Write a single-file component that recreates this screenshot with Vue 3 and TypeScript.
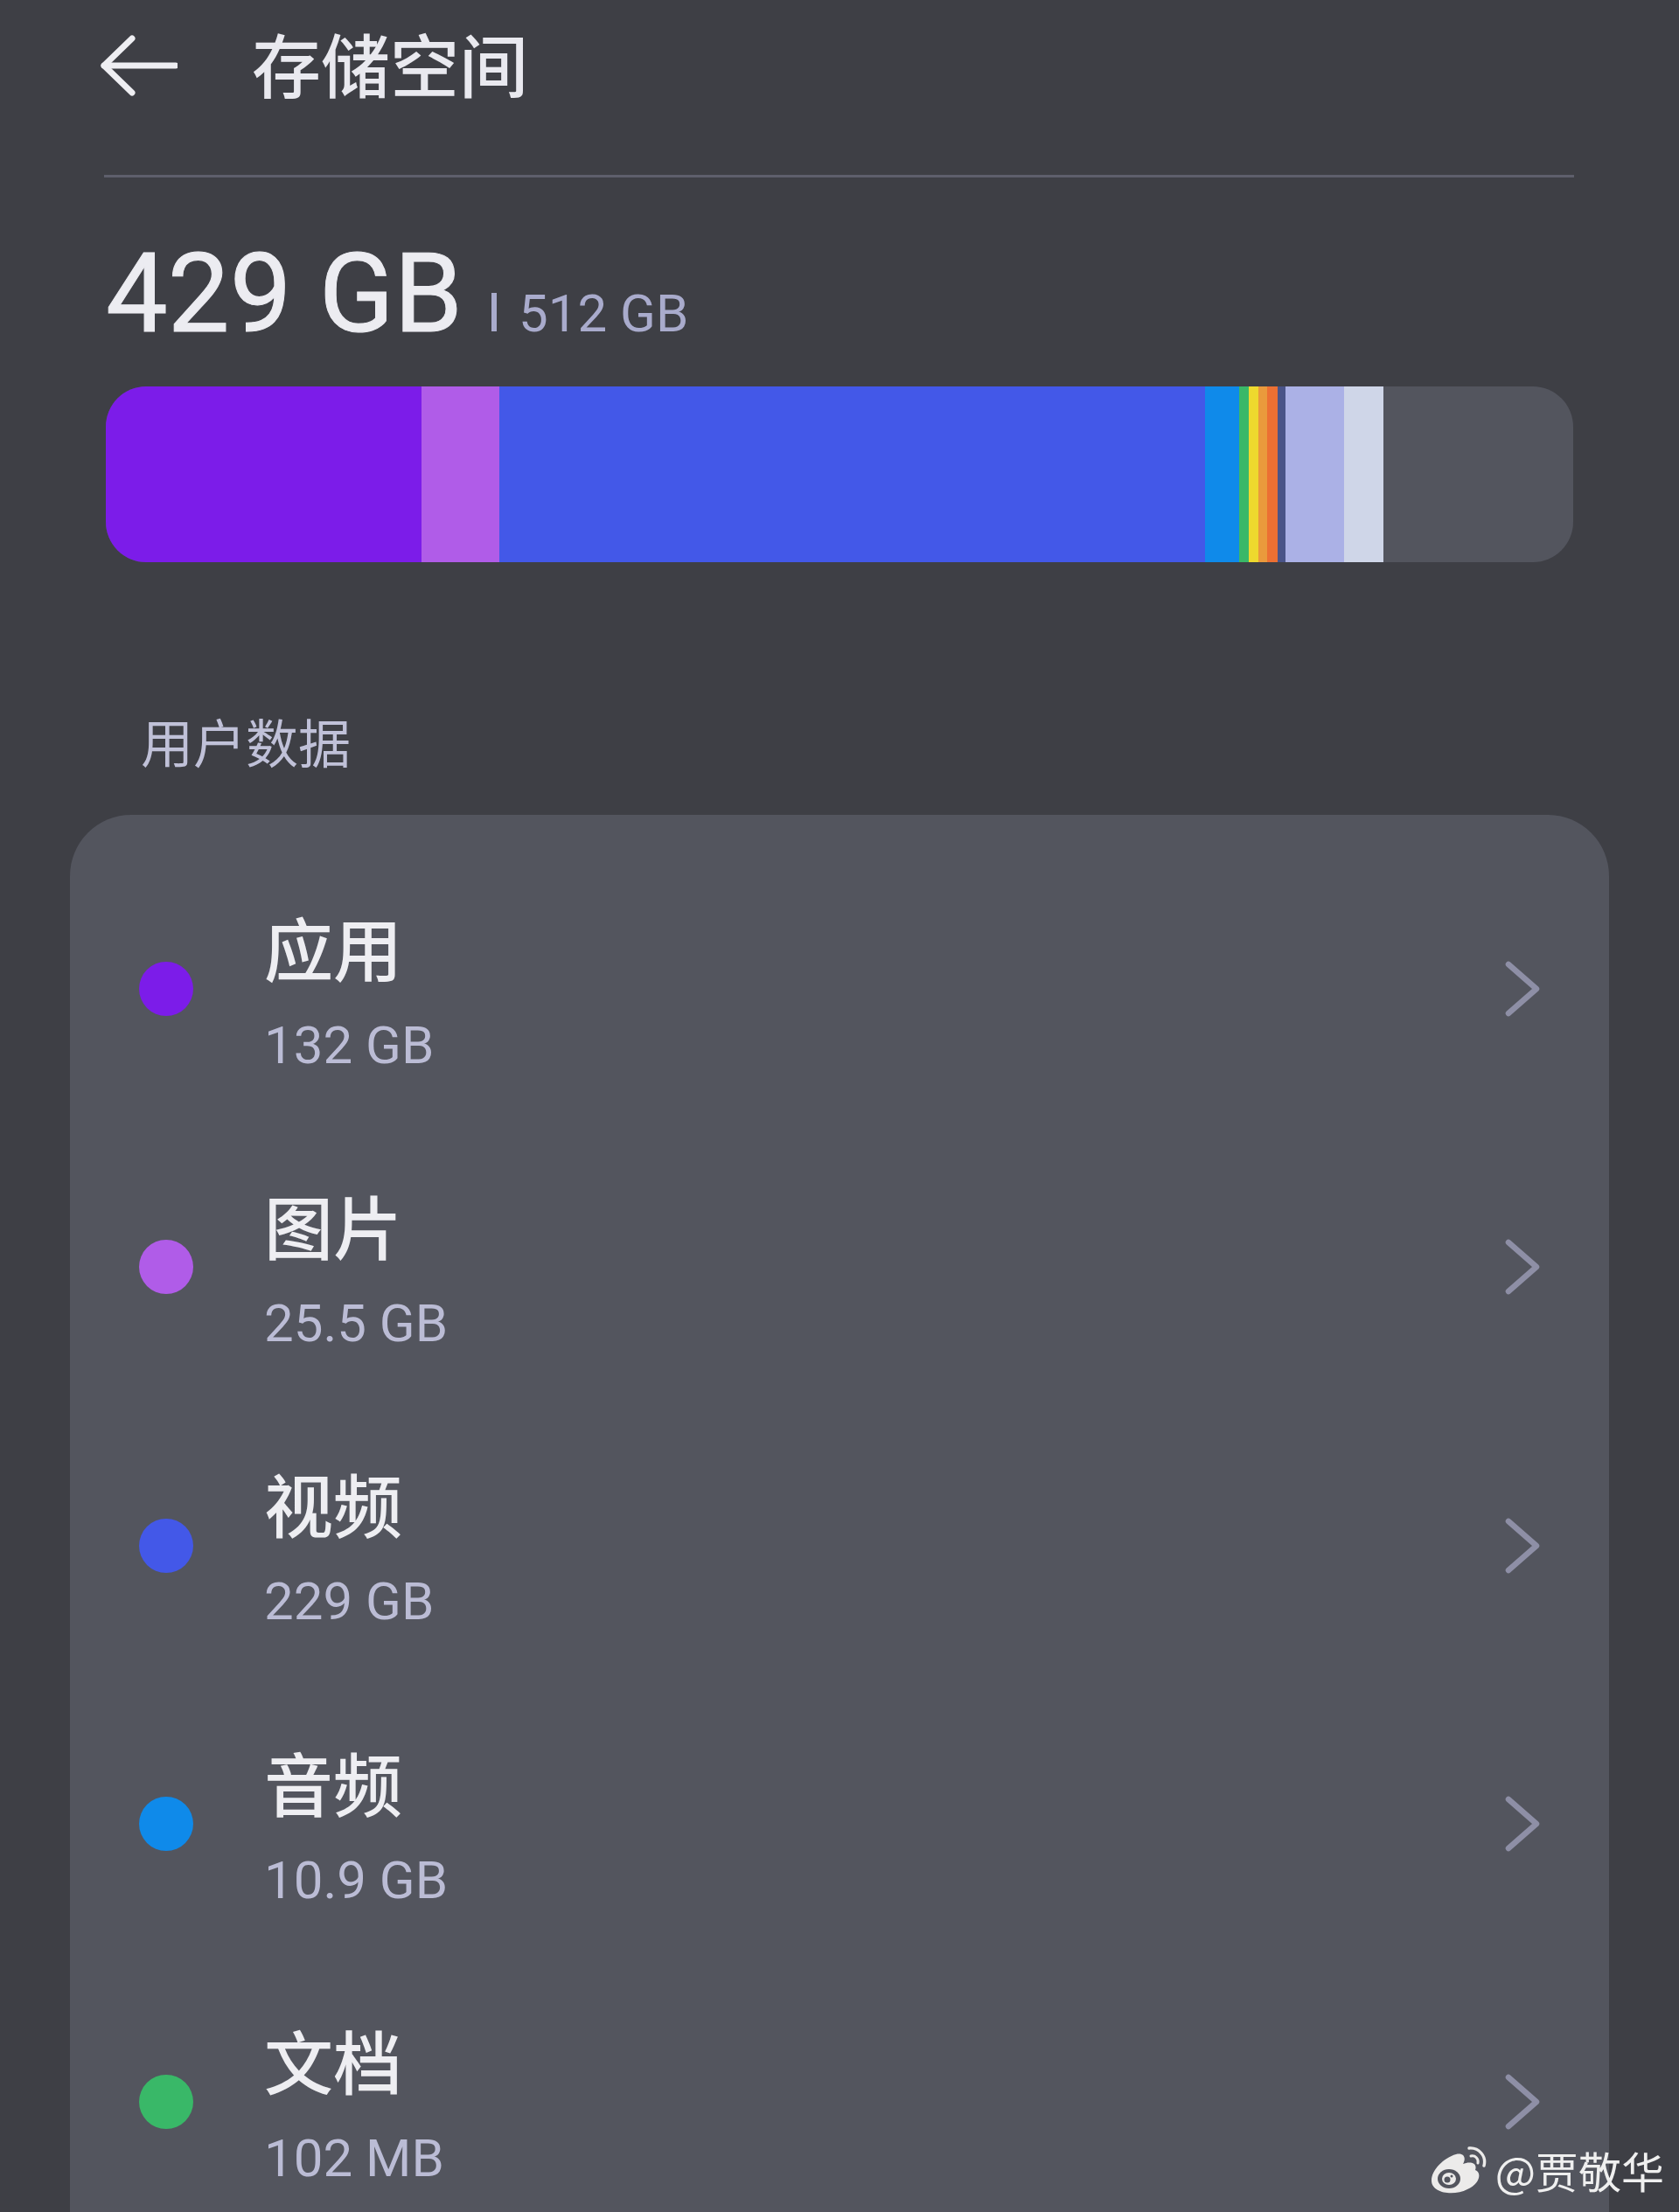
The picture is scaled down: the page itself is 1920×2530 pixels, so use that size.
<template>
  <div class="page">
    <header class="app-bar">
      <svg class="back-icon" viewBox="0 0 88 70" fill="none" stroke="#eeeef2" stroke-width="7" stroke-linecap="round" stroke-linejoin="round">
        <path d="M36 4 L4 35 L36 66" />
        <path d="M4 35 H86" />
      </svg>
      <h1 class="page-title">存储空间</h1>
    </header>
    <div class="divider"></div>

    <div class="summary">
      <span class="used">429 GB</span>
      <i class="sep"></i>
      <span class="total">512 GB</span>
    </div>

    <div class="usage-bar">
      <div
        v-for="seg in segments"
        :key="seg.color"
        class="usage-seg"
        :style="{ width: seg.width + 'px', backgroundColor: seg.color }"
      ></div>
    </div>

    <h2 class="section-label">用户数据</h2>

    <section class="card">
      <div v-for="item in items" :key="item.name" class="row">
        <span class="dot" :style="{ backgroundColor: item.color }"></span>
        <div class="row-text">
          <div class="row-name">{{ item.name }}</div>
          <div class="row-size">{{ item.size }}</div>
        </div>
        <svg class="chevron" viewBox="0 0 40 64" fill="none" stroke="#8e8fa6" stroke-width="6.5" stroke-linecap="round" stroke-linejoin="round">
          <path d="M4 4 L36 32 L4 60" />
        </svg>
      </div>
    </section>

    <div class="watermark">
      <svg class="weibo" viewBox="0 0 64 56">
        <path fill="#ecebea" d="M1 40 C1 28 15 14 29 10 C38 8 41 14 37 21 C44 18 54 19 51 28 C59 31 56 44 42 50 C27 58 1 55 1 40 Z" />
        <ellipse cx="21" cy="38" rx="13" ry="11" fill="#53555e" />
        <ellipse cx="21" cy="38" rx="8" ry="7" fill="#ecebea" />
        <circle cx="19" cy="39" r="3.5" fill="#53555e" />
        <circle cx="24" cy="35" r="1.5" fill="#53555e" />
        <path d="M44 3 C55 2 64 12 61 23" fill="none" stroke="#ecebea" stroke-width="3.4" stroke-linecap="round" />
        <path d="M46 12 C51 11 55 15 54 20" fill="none" stroke="#ecebea" stroke-width="3" stroke-linecap="round" />
      </svg>
      <span class="watermark-text">@贾敬华</span>
    </div>
  </div>
</template>

<script setup lang="ts">
interface Segment {
  width: number
  color: string
}

interface StorageItem {
  name: string
  size: string
  color: string
}

// widths are measured off the bar, the rest of the track stays empty
const segments: Segment[] = [
  { width: 361, color: '#7c1ce9' },
  { width: 89, color: '#b05ce8' },
  { width: 807, color: '#4358e8' },
  { width: 39, color: '#0f8aea' },
  { width: 11, color: '#39b868' },
  { width: 11, color: '#eed92e' },
  { width: 10, color: '#ea9a3c' },
  { width: 12, color: '#ec7033' },
  { width: 9, color: '#4a5488' },
  { width: 67, color: '#abb1e6' },
  { width: 45, color: '#cfd6e8' }
]

const items: StorageItem[] = [
  { name: '应用', size: '132 GB', color: '#7c1ce9' },
  { name: '图片', size: '25.5 GB', color: '#b05ce8' },
  { name: '视频', size: '229 GB', color: '#4358e8' },
  { name: '音频', size: '10.9 GB', color: '#0f8aea' },
  { name: '文档', size: '102 MB', color: '#39b868' }
]
</script>

<style scoped>
.page {
  position: relative;
  display: flex;
  flex-direction: column;
  width: 1920px;
  height: 2530px;
  overflow: hidden;
  background-color: #3e3f45;
  font-family: Roboto, "Noto Sans CJK SC", sans-serif;
}

.page > * {
  flex-shrink: 0;
}

.app-bar {
  display: flex;
  align-items: center;
  height: 150px;
  padding-left: 115px;
}

.back-icon {
  width: 88px;
  height: 70px;
  flex: none;
}

.page-title {
  margin: 0 0 6px 85px;
  font-family: "Noto Sans CJK SC", sans-serif;
  font-size: 79px;
  font-weight: 500;
  line-height: 100px;
  color: #e9e9ef;
}

.divider {
  height: 3px;
  margin: 50px 120px 0 119px;
  background-color: #5e5f6c;
}

.summary {
  display: flex;
  align-items: baseline;
  height: 239px;
  padding: 63px 0 0 121px;
  box-sizing: border-box;
}

.used {
  font-size: 126px;
  font-weight: 400;
  line-height: 140px;
  color: #ececf1;
  -webkit-text-stroke: 1px #ececf1;
}

.sep {
  display: inline-block;
  width: 6px;
  height: 44px;
  margin-left: 33px;
  background-color: #a9abcc;
}

.total {
  margin-left: 25px;
  font-size: 60px;
  line-height: 60px;
  color: #a9abcc;
}

.usage-bar {
  display: flex;
  height: 201px;
  margin: 0 121px;
  border-radius: 46px;
  overflow: hidden;
  background-color: #53555e;
}

.usage-seg {
  flex: none;
  height: 100%;
}

.section-label {
  margin: 169px 0 0 161px;
  font-family: "Noto Sans CJK SC", sans-serif;
  font-size: 60px;
  font-weight: 400;
  line-height: 70px;
  color: #c0c1d8;
}

.card {
  flex: 1 1 0;
  min-height: 0;
  margin: 50px 80px 0;
  padding-top: 40px;
  border-radius: 70px 70px 0 0;
  background-color: #53555e;
}

.row {
  display: flex;
  align-items: center;
  height: 318.3px;
  padding: 0 79px;
}

.dot {
  flex: none;
  width: 62px;
  height: 62px;
  border-radius: 50%;
}

.row-text {
  margin-left: 81px;
}

.row-name {
  font-family: "Noto Sans CJK SC", sans-serif;
  font-size: 79px;
  font-weight: 500;
  line-height: 100px;
  color: #eeeef2;
}

.row-size {
  margin-top: 29px;
  font-size: 60px;
  line-height: 68px;
  color: #bbbcd5;
}

.chevron {
  flex: none;
  width: 40px;
  height: 64px;
  margin-left: auto;
}

.watermark {
  position: absolute;
  right: 17px;
  bottom: 20px;
  display: flex;
  align-items: center;
  gap: 10px;
}

.weibo {
  width: 64px;
  height: 56px;
  flex: none;
}

.watermark-text {
  font-family: "Noto Sans CJK SC", sans-serif;
  font-size: 49px;
  line-height: 56px;
  color: #efefef;
}
</style>
